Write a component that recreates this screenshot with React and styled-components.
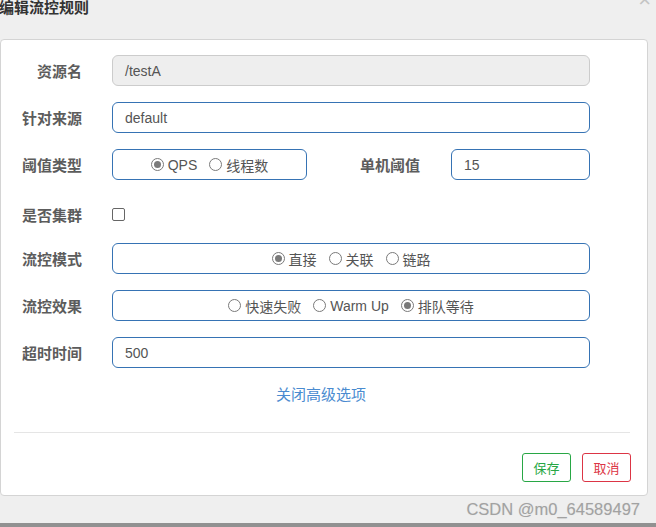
import React from 'react';
import styled, { createGlobalStyle } from 'styled-components';

const GlobalStyle = createGlobalStyle`
    html, body {
        margin: 0;
        padding: 0;
        background: #efefef;
        overflow: hidden;
    }
    * {
        box-sizing: border-box;
    }
`

const FONT = `"Liberation Sans", "Noto Sans CJK SC", sans-serif`;

const Page = styled.div`
    width: 656px;
    height: 527px;
    display: flex;
    flex-direction: column;
    background: #efefef;
    font-family: ${FONT};
    overflow: hidden;
`

const Header = styled.div`
    height: 39px;
    display: flex;
    justify-content: space-between;
    align-items: flex-start;
`

const Title = styled.div`
    font-size: 15px;
    line-height: 16px;
    font-weight: bold;
    color: #333;
    margin-left: -1px;
`

const Close = styled.span`
    font-size: 22px;
    line-height: 1;
    color: #c4c4c4;
    margin-top: -11px;
    margin-right: 5px;
`

const Card = styled.div`
    height: 457px;
    margin-right: 8px;
    background: #fff;
    border: 1px solid #d4d4d4;
    border-radius: 4px;
    padding-top: 15px;
    display: flex;
    flex-direction: column;
`

const Form = styled.div`
    display: flex;
    flex-direction: column;
    gap: 16px;
`

const Row = styled.div`
    width: 589px;
    display: flex;
    align-items: center;
    height: 31px;
    padding-top: ${(props) => props.$shift || 0}px;
`

const Label = styled.label`
    width: ${(props) => props.$width || 81}px;
    margin-right: ${(props) => props.$gap || 30}px;
    text-align: right;
    font-size: 15px;
    font-weight: bold;
    color: #5c5c5c;
    white-space: nowrap;
`

const Input = styled.div`
    width: ${(props) => props.$width || 478}px;
    height: 31px;
    display: flex;
    align-items: center;
    padding: 0 12px;
    font-size: 14px;
    color: #555;
    border-radius: 6px;
    border: 1px solid ${(props) => props.$disabled ? "#cccccc" : "#3673b4"};
    background: ${(props) => props.$disabled ? "#eeeeee" : "#fff"};
`

const RadioBox = styled.div`
    width: ${(props) => props.$width || 478}px;
    height: 31px;
    display: flex;
    align-items: center;
    justify-content: center;
    gap: 12px;
    border: 1px solid #3673b4;
    border-radius: 6px;
    font-size: 14px;
    color: #555;
`

const Option = styled.span`
    display: inline-flex;
    align-items: center;
    gap: 4px;
`

const Dot = styled.span`
    width: 13px;
    height: 13px;
    border-radius: 50%;
    border: 1px solid #7a7a7a;
    display: inline-flex;
    align-items: center;
    justify-content: center;
    background: #fff;

    &::after {
        content: "";
        width: 7px;
        height: 7px;
        border-radius: 50%;
        background: ${(props) => props.$checked ? "#7a7a7a" : "transparent"};
    }
`

const CheckBox = styled.span`
    width: 13px;
    height: 13px;
    border: 1px solid #666;
    border-radius: 2px;
    background: #fff;
`

const Spacer = styled.div`
    flex: 1;
`

const Toggle = styled.div`
    margin-top: 17px;
    height: 20px;
    line-height: 20px;
    text-align: center;
    font-size: 15px;
    color: #4a8bd0;
    padding-right: 6px;
`

const Divider = styled.div`
    margin: 27px 17px 0 13px;
    height: 1px;
    background: #e5e5e5;
`

const Footer = styled.div`
    display: flex;
    justify-content: flex-end;
    gap: 11px;
    padding: 20px 16px 0 0;
`

const Button = styled.button`
    width: 49px;
    height: 29px;
    padding: 0;
    font-family: ${FONT};
    font-size: 13px;
    background: #fff;
    border-radius: 3px;
    color: ${(props) => props.$color};
    border: 1px solid ${(props) => props.$color};
`

const Watermark = styled.div`
    height: 27px;
    display: flex;
    align-items: center;
    justify-content: flex-end;
    padding-right: 16px;
    font-size: 16.5px;
    color: #a2a2a2;
    text-shadow: 0 0 1px #d8d8d8;
`

const BottomBar = styled.div`
    height: 4px;
    background: #919191;
`

const Radio = ({ checked, children }) => (
    <Option>
        <Dot $checked={checked} />
        {children}
    </Option>
)

const App = () => {
    return (
        <Page>
            <GlobalStyle />
            <Header>
                <Title>编辑流控规则</Title>
                <Close>×</Close>
            </Header>
            <Card>
                <Form>
                    <Row>
                        <Label>资源名</Label>
                        <Input $disabled>/testA</Input>
                    </Row>
                    <Row>
                        <Label>针对来源</Label>
                        <Input>default</Input>
                    </Row>
                    <Row>
                        <Label>阈值类型</Label>
                        <RadioBox $width={195}>
                            <Radio checked>QPS</Radio>
                            <Radio>线程数</Radio>
                        </RadioBox>
                        <Spacer />
                        <Label $width={80} $gap={31}>单机阈值</Label>
                        <Input $width={139}>15</Input>
                    </Row>
                    <Row $shift={6}>
                        <Label>是否集群</Label>
                        <CheckBox />
                    </Row>
                    <Row>
                        <Label>流控模式</Label>
                        <RadioBox>
                            <Radio checked>直接</Radio>
                            <Radio>关联</Radio>
                            <Radio>链路</Radio>
                        </RadioBox>
                    </Row>
                    <Row>
                        <Label>流控效果</Label>
                        <RadioBox>
                            <Radio>快速失败</Radio>
                            <Radio>Warm Up</Radio>
                            <Radio checked>排队等待</Radio>
                        </RadioBox>
                    </Row>
                    <Row>
                        <Label>超时时间</Label>
                        <Input>500</Input>
                    </Row>
                </Form>
                <Toggle>关闭高级选项</Toggle>
                <Divider />
                <Footer>
                    <Button $color="#28a745">保存</Button>
                    <Button $color="#dc3545">取消</Button>
                </Footer>
            </Card>
            <Watermark>CSDN @m0_64589497</Watermark>
            <BottomBar />
        </Page>
    );
}

export default App;
